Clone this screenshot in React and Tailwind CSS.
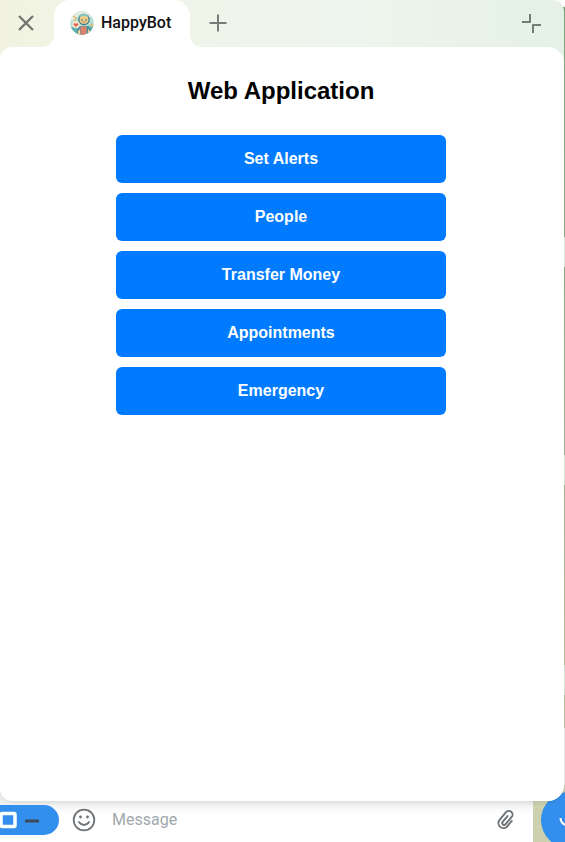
const actions = ['Set Alerts', 'People', 'Transfer Money', 'Appointments', 'Emergency'];

function Avatar() {
  return (
    <svg width="24" height="24" viewBox="0 0 24 24" aria-hidden="true" className="shrink-0">
      <defs>
        <clipPath id="avatar-clip"><circle cx="12" cy="12" r="11.7" /></clipPath>
      </defs>
      <g clipPath="url(#avatar-clip)">
        <rect width="24" height="24" fill="#b5dcd6" />
        <path d="M0 8 4 3l5-3h8l5 5-3 3-3-4-6-1-4 5-6 3Z" fill="#e2eedb" />
        <path d="M0 16h6l3 8H0Zm18-1h6v9h-6Z" fill="#62b2b0" />
        <path d="M3 5l3 2-2 3M20 13l3 1-2 2" stroke="#dfbd78" strokeWidth="1.5" fill="none" />
        <path d="M7 24v-6l3-3h8l3 4v5Z" fill="#4d9298" />
        <path d="M10.500 15.500h6V24h-6Z" fill="#df806b" />
        <path d="M8 20l2-2v6H8Zm10-2 2 2v4h-2Z" fill="#f0d3a1" />
        <circle cx="14" cy="8.5" r="5.8" fill="#397987" />
        <path d="M9.500 8c0-5 8-6 9 0v2c-1 4-8 4-9 0Z" fill="#e8cd8c" />
        <path d="M9 6.500c1-5 9-5 10 0-3-2-7-2-10 0Z" fill="#82c5bb" />
        <circle cx="12" cy="9" r=".7" fill="#394952" />
        <circle cx="16" cy="9" r=".7" fill="#394952" />
        <path d="M12.5 11q1.5 1 3 0" fill="none" stroke="#a46c52" strokeWidth=".7" />
        <circle cx="6" cy="13.5" r="3.600" fill="#fae7d1" />
        <path d="m6 16-2.5-2.5q0-2 2.5-.8 2.500-1.200 2.500.8Z" fill="#dc6352" />
      </g>
    </svg>
  );
}

function TabBar() {
  return (
    <header className="flex h-[47px] items-stretch">
      <button aria-label="Close" className="flex w-[54px] items-center justify-center pr-0.5 pb-0.5 text-[#70756f]">
        <svg width="20" height="20" viewBox="0 0 20 20" fill="none" stroke="currentColor" strokeWidth="2.300"><path d="m3 3 14 14M17 3 3 17" /></svg>
      </button>
      <button className="relative flex w-[136px] items-center gap-[7px] rounded-t-2xl bg-white pb-0.5 pl-4">
        <span className="absolute -left-3 bottom-0 size-3 bg-[radial-gradient(circle_at_top_left,transparent_12px,white_12px)]" />
        <Avatar />
        <span className="font-[Roboto,sans-serif] text-base font-medium text-[#111]">HappyBot</span>
        <span className="absolute -right-3 bottom-0 size-3 bg-[radial-gradient(circle_at_top_right,transparent_12px,white_12px)]" />
      </button>
      <button aria-label="New tab" className="flex w-14 items-center justify-center pb-0.5 text-[#767c78]">
        <svg width="20" height="20" viewBox="0 0 20 20" fill="none" stroke="currentColor" strokeWidth="2"><path d="M10 1.500v17M1.500 10h17" /></svg>
      </button>
      <button aria-label="Exit full screen" className="ml-auto flex w-[66px] items-center justify-center pb-0.5 text-[#707d74]">
        <svg width="20" height="20" viewBox="0 0 20 20" fill="none" stroke="currentColor" strokeWidth="2" strokeLinejoin="round"><path d="M9 1v8H1M20 12h-8v8" /></svg>
      </button>
    </header>
  );
}

function Composer() {
  return (
    <footer className="-mt-4 flex h-[57px] overflow-hidden bg-[#cdd0af]">
      <div className="flex min-w-0 flex-1 items-start bg-linear-to-b from-[#ececec] from-28% to-white to-50% pt-[18px]">
        <button aria-label="Open web app" className="mt-0.5 flex h-[30px] w-[59px] shrink-0 items-center rounded-r-full bg-[#338fed]">
          <svg width="40" height="20" viewBox="0 0 40 20" fill="none"><rect x="1" y="3.500" width="14" height="13" rx="1" stroke="#fff" strokeWidth="3.500" /><path d="M25 11h14" stroke="#3d4b58" strokeWidth="3" /></svg>
        </button>
        <button aria-label="Emoji" className="mt-px ml-3 flex h-8 w-[26px] shrink-0 items-center justify-center text-[#6d7276]">
          <svg width="24" height="24" viewBox="0 0 24 24" fill="none" stroke="currentColor" strokeWidth="1.800"><circle cx="12" cy="12" r="10.300" /><path d="M6.500 13.500q5.500 7 11 0" /><circle cx="8.500" cy="9" r="1.400" fill="currentColor" stroke="none" /><circle cx="15.500" cy="9" r="1.400" fill="currentColor" stroke="none" /></svg>
        </button>
        <input aria-label="Message" placeholder="Message" className="ml-[15px] h-8 min-w-0 flex-1 bg-transparent font-[Roboto,sans-serif] text-base text-[#222] outline-none placeholder:text-[#a0a7ad]" />
        <button aria-label="Attach" className="mt-px mr-[15px] flex h-8 w-6 items-center justify-center text-[#6d7276]">
          <svg width="24" height="24" viewBox="0 0 24 24" fill="none" stroke="currentColor" strokeWidth="1.900" strokeLinecap="round"><path transform="rotate(40 12 12)" d="M17 9v7a5 5 0 0 1-10 0V6a3.700 3.700 0 0 1 7.400 0v9.500a1.900 1.900 0 0 1-3.800 0V8" /></svg>
        </button>
      </div>
      <div className="ml-2 mt-[7px] w-6 shrink-0 overflow-hidden">
        <button aria-label="Record voice message" className="flex size-14 items-center justify-center rounded-full bg-[#338fed] text-white">
          <svg width="24" height="24" viewBox="0 0 24 24" fill="none" stroke="currentColor" strokeWidth="2"><rect x="8" y="2" width="8" height="13" rx="4" fill="currentColor" stroke="none" /><path d="M3.500 10c0 10 17 10 17 0M12 18v4" /></svg>
        </button>
      </div>
    </footer>
  );
}

export default function App() {
  return (
    <div className="flex h-screen flex-col overflow-hidden bg-[linear-gradient(to_bottom,#fff_7px,#7fac7e_7px,#8db38a_237px,#e2f2e2_237px,#e2f2e2_267px,#8db087_267px,#a6b99a_455px,#dcefdc_455px,#dcefdc_485px,#a8b895_485px,#c2c5a0_665px,#dcefdc_665px,#dcefdc_695px,#bdc7a3_695px,#c6caa9_728px,#eee_728px,#eee_790px,#cdd0af_790px)] font-['Liberation_Sans',Arial,sans-serif]">
      <div className="relative z-10 mr-px flex min-h-0 flex-1 flex-col rounded-b-2xl rounded-tr-xl bg-linear-to-r from-[#f2f3e2] via-[#eef5ee] via-60% to-[#e5f1e5] shadow-[0_1px_5px_rgba(0,0,0,0.1)]">
        <TabBar />
        <main className="flex-1 rounded-l-xl rounded-r-2xl bg-white pt-[30px]">
          <div className="mx-auto max-w-[330px] -translate-x-px">
            <h1 className="text-center text-2xl leading-7 font-bold text-black">Web Application</h1>
            <nav aria-label="Services" className="mt-[30px] flex flex-col gap-2.5">
              {actions.map((label) => (
                <button key={label} className="h-12 rounded-md bg-[#007bff] text-base font-bold text-white">{label}</button>
              ))}
            </nav>
          </div>
        </main>
      </div>
      <Composer />
    </div>
  );
}
